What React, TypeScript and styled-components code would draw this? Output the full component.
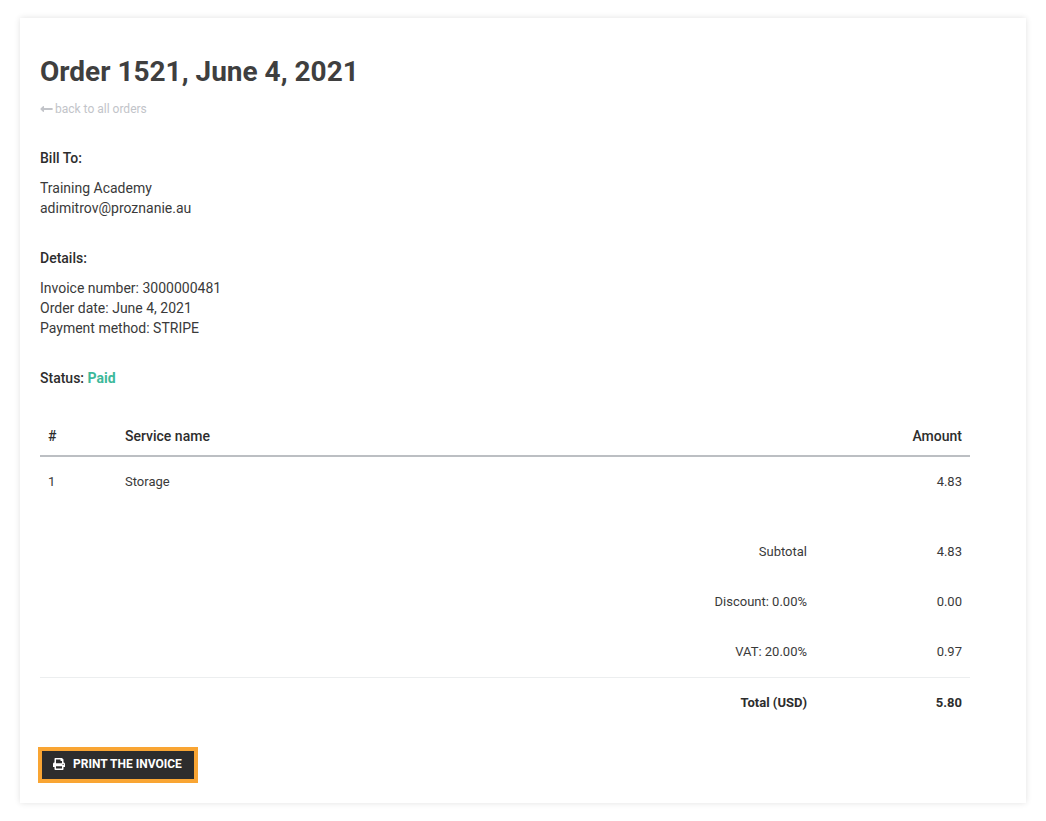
import React from "react";
import { FaLongArrowAltLeft, FaPrint } from "react-icons/fa";
import styled, { createGlobalStyle } from "styled-components";

const GlobalStyle = createGlobalStyle`
  html, body {
    margin: 0;
    background: #fff;
  }
  body {
    font-family: Roboto, "Liberation Sans", sans-serif;
    font-size: 14px;
    line-height: 20px;
    color: #3a3a3a;
  }
`;

const Page = styled.div`
  width: 1046px;
  height: 821px;
  padding: 18px 20px;
  box-sizing: border-box;
`;

const Card = styled.div`
  height: 785px;
  box-sizing: border-box;
  padding: 34px 20px 0;
  background: #fff;
  box-shadow: 0 0 6px rgba(0, 0, 0, 0.12);
`;

const Title = styled.h1`
  margin: 0;
  font-size: 28px;
  line-height: 40px;
  font-weight: 700;
  color: #3f3f3f;
`;

const BackLink = styled.a`
  display: flex;
  align-items: center;
  gap: 2px;
  margin-top: 7px;
  height: 20px;
  font-size: 12px;
  color: #c2c4c9;
  svg {
    width: 13px;
    height: 14px;
  }
`;

const Section = styled.section<{ $top: number }>`
  margin-top: ${(p) => p.$top}px;
`;

const Label = styled.div`
  font-weight: 500;
  color: #2d2d2d;
  margin-bottom: 10px;
`;

const Line = styled.div``;

const Status = styled.div`
  margin-top: 30px;
  font-weight: 500;
  color: #2d2d2d;
`;

const Paid = styled.span`
  color: #3cb99a;
  font-weight: 700;
`;

const Table = styled.div`
  width: 930px;
  margin-top: 29px;
  font-size: 13px;
`;

const Row = styled.div<{ $height: number; $bold?: boolean }>`
  display: grid;
  grid-template-columns: 85px 1fr 155px;
  align-items: center;
  height: ${(p) => p.$height}px;
  box-sizing: border-box;
  font-weight: ${(p) => (p.$bold ? 700 : 400)};
  color: ${(p) => (p.$bold ? "#2d2d2d" : "inherit")};
`;

const HeadRow = styled(Row)`
  padding-bottom: 1px;
  font-size: 14px;
  font-weight: 500;
  color: #2d2d2d;
  border-bottom: 2px solid #bcbfc3;
`;

const Cell = styled.div<{ $right?: boolean; $pad?: boolean }>`
  text-align: ${(p) => (p.$right ? "right" : "left")};
  padding: 0 8px;
  padding-left: ${(p) => (p.$pad ? "8px" : "0")};
`;

const Summary = styled.div`
  margin-top: 21px;
`;

const TotalRow = styled(Row)`
  border-top: 1px solid #eceeef;
`;

const PrintButton = styled.button`
  display: flex;
  align-items: center;
  gap: 8px;
  height: 36px;
  margin: 20px 0 0 -2px;
  padding: 0 12px 2px 11px;
  background: #2d2d2d;
  border: 4px solid #f9a533;
  color: #fff;
  font-family: inherit;
  font-size: 12px;
  font-weight: 700;
  text-transform: uppercase;
  svg {
    width: 12px;
    height: 12px;
  }
`;

const summaryRows = [
  { label: "Subtotal", amount: "4.83" },
  { label: "Discount: 0.00%", amount: "0.00" },
  { label: "VAT: 20.00%", amount: "0.97" },
];

const App: React.FC = () => {
  return (
    <Page>
      <GlobalStyle />
      <Card>
        <Title>Order 1521, June 4, 2021</Title>
        <BackLink>
          <FaLongArrowAltLeft />
          back to all orders
        </BackLink>

        <Section $top={29}>
          <Label>Bill To:</Label>
          <Line>Training Academy</Line>
          <Line>adimitrov@proznanie.au</Line>
        </Section>

        <Section $top={30}>
          <Label>Details:</Label>
          <Line>Invoice number: 3000000481</Line>
          <Line>Order date: June 4, 2021</Line>
          <Line>Payment method: STRIPE</Line>
        </Section>

        <Status>
          Status: <Paid>Paid</Paid>
        </Status>

        <Table>
          <HeadRow $height={40}>
            <Cell $pad>#</Cell>
            <Cell>Service name</Cell>
            <Cell $right>Amount</Cell>
          </HeadRow>
          <Row $height={49}>
            <Cell $pad>1</Cell>
            <Cell>Storage</Cell>
            <Cell $right>4.83</Cell>
          </Row>
          <Summary>
            {summaryRows.map((row) => (
              <Row key={row.label} $height={50}>
                <span />
                <Cell $right>{row.label}</Cell>
                <Cell $right>{row.amount}</Cell>
              </Row>
            ))}
          </Summary>
          <TotalRow $height={50} $bold>
            <span />
            <Cell $right>Total (USD)</Cell>
            <Cell $right>5.80</Cell>
          </TotalRow>
        </Table>

        <PrintButton>
          <FaPrint />
          Print the invoice
        </PrintButton>
      </Card>
    </Page>
  );
};

export default App;
